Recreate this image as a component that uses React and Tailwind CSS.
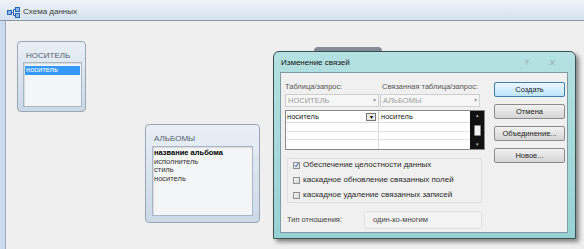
import React from "react";

// Access-like "Схема данных" window with the "Изменение связей" dialog on top

const AppIcon = () => (
  <svg width="13" height="11" viewBox="0 0 13 11">
    <rect x="0.5" y="3.5" width="4" height="4" fill="#8fb8e8" stroke="#2a64b4" />
    <rect x="8.5" y="0.5" width="4" height="4" fill="#8fb8e8" stroke="#2a64b4" />
    <rect x="8.5" y="6.5" width="4" height="4" fill="#8fb8e8" stroke="#2a64b4" />
    <path d="M4.5 5.5H6.5V2.5H8.5M6.5 5.5V8.5H8.5" fill="none" stroke="#2a64b4" />
  </svg>
);

const TableNode = ({ title, fields, selected, bold, className, listClass }) => (
  <div
    className={`absolute flex flex-col rounded-[4px] border border-[#9aa6b3] bg-gradient-to-b from-[#e9eff6] to-[#cbd9e7] ${className}`}
  >
    <div className="flex h-[19px] items-end pl-[8px] text-[8px] leading-[10px] text-[#556070]">{title}</div>
    <div
      className={`flex flex-col border border-[#aab6c3] bg-[#f4f5f7] pt-[2px] shadow-[inset_1px_1px_1px_rgba(0,0,0,0.12)] ${listClass}`}
    >
      {fields.map((f, i) => (
        <div
          key={f}
          className={`h-[8.5px] whitespace-nowrap pl-[1px] text-[7.5px] leading-[8.5px] ${
            selected === i ? "bg-[#3399ff] text-white" : "text-[#333]"
          } ${bold === i ? "font-bold text-black" : ""}`}
        >
          {f}
        </div>
      ))}
    </div>
  </div>
);

const Combo = ({ label, className }) => (
  <div
    className={`flex h-[13px] items-center justify-between border border-[#cfcfcf] bg-[#f6f6f6] pl-[2px] pr-[2px] text-[7.5px] text-[#9a9a9a] ${className}`}
  >
    <span>{label}</span>
    <span className="text-[6px] text-[#999]">▾</span>
  </div>
);

const Check = ({ checked, label }) => (
  <div className="flex h-[12px] items-center gap-[3px] pl-[5px]">
    <div className="flex h-[7px] w-[7px] items-center justify-center border border-[#8e8f8f] bg-gradient-to-br from-[#f4f4f4] to-[#dcdcdc]">
      {checked && (
        <svg width="6" height="6" viewBox="0 0 6 6">
          <path d="M0.8 3.2L2.3 4.8L5.3 0.8" fill="none" stroke="#2b55a8" strokeWidth="1.2" />
        </svg>
      )}
    </div>
    <span className="text-[8px] leading-[10px] text-[#2a2a2a]">{label}</span>
  </div>
);

const Btn = ({ children, active }) => (
  <div
    className={`flex h-[15px] w-[71px] items-center justify-center rounded-[2px] border text-[7.5px] text-[#222] ${
      active
        ? "border-[#3c7fb1] bg-gradient-to-b from-[#eaf6fd] to-[#bee6fd]"
        : "border-[#8b8b8b] bg-gradient-to-b from-[#f2f2f2] to-[#d5d5d5]"
    }`}
  >
    {children}
  </div>
);

export default function App() {
  return (
    <div className="relative flex h-[249px] w-[584px] flex-col overflow-hidden bg-[#c9d9ec] font-['Liberation_Sans',Arial,sans-serif]">
      <div className="flex h-[21px] shrink-0 items-center gap-[3px] border-b border-[#8c98a6] bg-gradient-to-b from-[#eef2f7] to-[#d6e2ef] pl-[7px] pt-[4px]">
        <AppIcon />
        <span className="text-[8px] text-[#3a3a3a]">Схема данных</span>
      </div>
      <div className="flex flex-1">
        <div className="w-[6px] shrink-0 border-r border-[#9aa7b6] bg-[#cbdcee]" />
        <div className="relative flex-1 bg-[#efefef]">
          <TableNode
            title="НОСИТЕЛЬ"
            fields={["носитель"]}
            selected={0}
            className="left-[11px] top-[20px] h-[71px] w-[69px]"
            listClass="ml-[5px] mt-[1px] h-[45px] w-[59px] px-[1px] pt-[3px]"
          />
          <TableNode
            title="АЛЬБОМЫ"
            fields={["название альбома", "исполнитель", "стиль", "носитель"]}
            bold={0}
            className="left-[139px] top-[103px] h-[99px] w-[115px]"
            listClass="ml-[6px] mt-[2px] h-[70px] w-[101px]"
          />
          <div className="absolute left-[308px] top-[26px] h-[80px] w-[68px] rounded-[4px] border-t-[4px] border-[#858d97] bg-[#dfe7ef]" />

          {/* relationship dialog */}
          <div className="absolute left-[267px] top-[30px] flex h-[188px] w-[303px] flex-col rounded-t-[6px] border border-[#3e5055] bg-gradient-to-b from-[#b4e1e1] to-[#97d2d3] shadow-[3px_3px_4px_rgba(0,0,0,0.45)]">
            <div className="flex h-[20px] shrink-0 items-center justify-between pl-[7px] pr-[20px]">
              <span className="pt-[2px] text-[8px] text-[#111]">Изменение связей</span>
              <div className="flex items-center gap-[21px] pt-[1px] text-[8px] text-[#8aa0a0]">
                <span>?</span>
                <span>X</span>
              </div>
            </div>
            <div className="ml-[6px] flex h-[161px] w-[288px] border border-[#7d9ca2] bg-[#f0f0f0] pl-[4px] pt-[9px]">
              <div className="flex w-[200px] flex-col">
                <div className="flex h-[10px] text-[7.5px] leading-[10px] text-[#555]">
                  <span className="w-[97px]">Таблица/запрос:</span>
                  <span>Связанная таблица/запрос:</span>
                </div>
                <div className="mt-[2px] flex gap-[1px]">
                  <Combo label="НОСИТЕЛЬ" className="w-[94px]" />
                  <Combo label="АЛЬБОМЫ" className="w-[100px]" />
                </div>
                <div className="mt-[3px] flex h-[40px] border border-[#8a8a8a] bg-white">
                  <div className="flex flex-1 flex-col">
                    <div className="flex h-[12px] border-b border-[#dcdcdc]">
                      <div className="flex w-[93px] items-center justify-between border-r border-[#cfcfcf] pl-[1px] pr-[2px] text-[7.5px] text-[#222]">
                        <span>носитель</span>
                        <div className="flex h-[8px] w-[10px] items-center justify-center border border-[#777] bg-[#e8e8e8] text-[6px] leading-none text-black">
                          ▾
                        </div>
                      </div>
                      <div className="flex items-center pl-[2px] text-[7.5px] text-[#222]">носитель</div>
                    </div>
                    {[0, 1, 2].map((r) => (
                      <div key={r} className="flex h-[9.5px] border-b border-[#e2e2e2] last:border-b-0">
                        <div className="w-[93px] border-r border-[#dcdcdc]" />
                      </div>
                    ))}
                  </div>
                  <div className="flex w-[14px] flex-col items-center justify-between bg-[#111] py-[2px] text-[5px] leading-none text-[#bbb]">
                    <span>▴</span>
                    <div className="h-[11px] w-[7px] rounded-[1px] border border-[#888] bg-[#f2f2f2]" />
                    <span>▾</span>
                  </div>
                </div>
                <div className="ml-[2px] mt-[8px] flex h-[45px] w-[195px] flex-col gap-[3px] rounded-[2px] border border-[#dedede]">
                  <Check checked label="Обеспечение целостности данных" />
                  <Check label="каскадное обновление связанных полей" />
                  <Check label="каскадное удаление связанных записей" />
                </div>
                <div className="ml-[2px] mt-[8px] flex h-[18px] items-center">
                  <span className="w-[77px] text-[7.5px] text-[#444]">Тип отношения:</span>
                  <div className="flex h-[18px] w-[118px] items-center rounded-[2px] border border-[#e0e0e0] bg-[#f3f3f3] pl-[8px] text-[7.5px] text-[#444]">
                    один-ко-многим
                  </div>
                </div>
              </div>
              <div className="ml-[9px] flex flex-col gap-[7px]">
                <Btn active>Создать</Btn>
                <Btn>Отмена</Btn>
                <Btn>Объединение...</Btn>
                <Btn>Новое...</Btn>
              </div>
            </div>
          </div>
        </div>
      </div>
    </div>
  );
}
